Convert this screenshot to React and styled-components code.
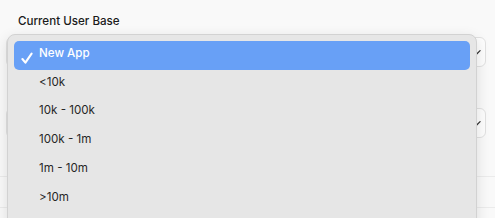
import styled, { createGlobalStyle } from 'styled-components'

const GlobalStyle = createGlobalStyle`
  html, body {
    margin: 0;
    padding: 0;
    background: #f9f9f9;
    font-family: Inter, 'Noto Sans', 'Liberation Sans', sans-serif;
    -webkit-font-smoothing: antialiased;
  }
`

const Page = styled.div`
  position: relative;
  width: 495px;
  height: 218px;
  overflow: hidden;
  padding: 12px 9px 0 6px;
  box-sizing: border-box;
`

const Field = styled.div`
  display: flex;
  flex-direction: column;
  gap: 7px;
  margin-bottom: ${(p) => p.$gap || 0}px;
`

const Label = styled.div`
  font-size: 11.6px;
  font-weight: 500;
  color: #1b1b1b;
  padding-left: 12px;
  height: 18px;
  line-height: 18px;
`

const SelectBox = styled.div`
  height: 30px;
  box-sizing: border-box;
  border: 1px solid #e1e1e1;
  border-radius: 6px;
  background: #fdfdfd;
  display: flex;
  align-items: center;
  justify-content: flex-end;
  padding-right: 4px;
  color: #333;
`

const Divider = styled.div`
  height: 1px;
  background: #ebebeb;
  margin-left: -6px;
  margin-right: -9px;
  margin-bottom: ${(p) => p.$gap || 0}px;
`

const Menu = styled.div`
  position: absolute;
  top: 34px;
  left: 7px;
  width: 470px;
  height: 200px;
  box-sizing: border-box;
  background: #e6e6e6;
  border: 1px solid #d2d2d2;
  border-radius: 8px;
  padding: 6px;
  box-shadow: 0 4px 14px rgba(0, 0, 0, 0.12);
  display: flex;
  flex-direction: column;
`

const Item = styled.div`
  height: 28.8px;
  flex-shrink: 0;
  box-sizing: border-box;
  display: flex;
  align-items: center;
  padding: 0 0 5px 25px;
  border-radius: 5px;
  position: relative;
  font-size: 11.6px;
  color: ${(p) => (p.$active ? '#ffffff' : '#262626')};
  background: ${(p) => (p.$active ? '#68a0f6' : 'transparent')};
  font-weight: ${(p) => (p.$active ? 500 : 400)};
`

const Check = styled.svg`
  position: absolute;
  left: 7px;
  top: 11px;
`

function Chevron() {
  return (
    <svg width="11" height="11" viewBox="0 0 12 12" fill="none">
      <polyline points="1,4 6,9 11,4" stroke="#333" strokeWidth="1.4" strokeLinecap="round" strokeLinejoin="round" />
    </svg>
  )
}

const options = ['New App', '<10k', '10k - 100k', '100k - 1m', '1m - 10m', '>10m']

export default function App() {
  return (
    <>
      <GlobalStyle />
      <Page>
        <Field $gap={41}>
          <Label>Current User Base</Label>
          <SelectBox>
            <Chevron />
          </SelectBox>
        </Field>
        <Field $gap={38}>
          <SelectBox>
            <Chevron />
          </SelectBox>
        </Field>
        <Divider $gap={30} />
        <Divider />
        <Menu>
          {options.map((o, i) => (
            <Item key={o} $active={i === 0}>
              {i === 0 && (
                <Check width="12" height="12" viewBox="0 0 12 12" fill="none">
                  <polyline points="1.4,7 4.4,10.6 10.6,1.6" stroke="#fff" strokeWidth="2.1" strokeLinecap="round" strokeLinejoin="round" />
                </Check>
              )}
              {o}
            </Item>
          ))}
        </Menu>
      </Page>
    </>
  )
}
